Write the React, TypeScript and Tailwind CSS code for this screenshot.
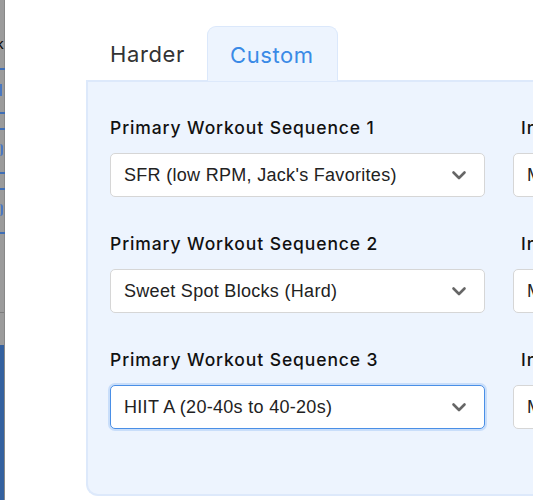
import React from 'react';

const fields = [
  { label: 'Primary Workout Sequence 1', value: "SFR (low RPM, Jack's Favorites)" },
  { label: 'Primary Workout Sequence 2', value: 'Sweet Spot Blocks (Hard)' },
  { label: 'Primary Workout Sequence 3', value: 'HIIT A (20-40s to 40-20s)', focused: true },
];

const Chevron = () => (
  <svg width="16" height="16" viewBox="0 0 16 16" className="text-[#666]">
    <path d="M2.5 5.5 L8 11 L13.5 5.5" fill="none" stroke="currentColor" strokeWidth="2.6" strokeLinecap="round" strokeLinejoin="round" />
  </svg>
);

const Select = ({ value, focused }: { value: string; focused?: boolean }) => (
  <div
    className={`h-[44px] rounded-[5px] bg-white flex items-center justify-between pl-[13px] pr-[17px] font-['Liberation_Sans',Arial,sans-serif] text-[18px] tracking-[0.3px] text-[#222] whitespace-nowrap overflow-hidden ${
      focused ? 'border border-[#4a8fe6] ring-2 ring-[#c9defa]' : 'border border-[#d6d6d6]'
    }`}
  >
    <span>{value}</span>
    <Chevron />
  </div>
);

export default function App() {
  return (
    <div className="w-[533px] h-[500px] flex overflow-hidden bg-white">
      {/* background page peeking through on the left */}
      <div className="w-[5px] flex flex-col shrink-0 border-r border-[#888]">
        <div className="h-[312px] bg-[#9b9b9b] relative">
          <div className="absolute left-0 top-[36px] text-[15px] leading-none font-['Liberation_Sans',sans-serif] text-black -ml-[4px]">k</div>
          <div className="absolute left-0 top-[68px] w-[5px] h-[2px] bg-[#3f6eb5]" />
          <div className="absolute left-0 top-[84px] w-[2px] h-[12px] bg-[#4a78c0]" />
          <div className="absolute left-0 top-[112px] w-[5px] h-[2px] bg-[#3f6eb5]" />
          <div className="absolute left-0 top-[128px] w-[5px] h-[2px] bg-[#3f6eb5]" />
          <div className="absolute left-0 top-[144px] w-[3px] h-[12px] border-r-2 border-[#4a78c0] rounded-r" />
          <div className="absolute left-0 top-[172px] w-[5px] h-[2px] bg-[#3f6eb5]" />
          <div className="absolute left-0 top-[188px] w-[5px] h-[2px] bg-[#3f6eb5]" />
          <div className="absolute left-0 top-[204px] w-[3px] h-[12px] border-r-2 border-[#4a78c0] rounded-r" />
          <div className="absolute left-0 top-[232px] w-[5px] h-[2px] bg-[#3f6eb5]" />
        </div>
        <div className="h-px bg-[#7d7d7d]" />
        <div className="h-[32px] bg-[#9b9b9b]" />
        <div className="flex-1 bg-[#34619f]" />
      </div>

      <div className="flex-1 pl-[81px] pt-[26px]">
        <div className="flex h-[54px] font-['Inter',sans-serif] text-[22px] tracking-[0.6px]">
          <div className="w-[121px] pl-[24px] pt-[2px] flex items-center text-[#333]">Harder</div>
          <div className="w-[131px] pl-[22px] pt-[2px] flex items-center text-[#3a8ae6] bg-[#edf4fe] border border-b-0 border-[#dbe8fb] rounded-t-[9px] relative z-10 -mb-px">
            Custom
          </div>
        </div>
        <div className="h-[416px] border-2 border-r-0 border-[#dde9fb] rounded-bl-[12px] bg-[#edf4fe] pl-[22px] pt-[36px]">
          <div className="grid grid-cols-[375px_375px] gap-x-[28px] gap-y-[37px]">
            {fields.map((f) => (
              <React.Fragment key={f.label}>
                <div className="flex flex-col gap-[15px]">
                  <div className="font-['Inter',sans-serif] font-medium text-[17.5px] tracking-[0.9px] leading-[20px] text-[#111] whitespace-nowrap">{f.label}</div>
                  <Select value={f.value} focused={f.focused} />
                </div>
                <div className="flex flex-col gap-[15px]">
                  <div className="font-['Inter',sans-serif] font-medium text-[17.5px] tracking-[0.9px] leading-[20px] text-[#111] whitespace-nowrap pl-[8px]">Interval Workout Sequence</div>
                  <Select value="Micro Intervals" />
                </div>
              </React.Fragment>
            ))}
          </div>
        </div>
      </div>
    </div>
  );
}
